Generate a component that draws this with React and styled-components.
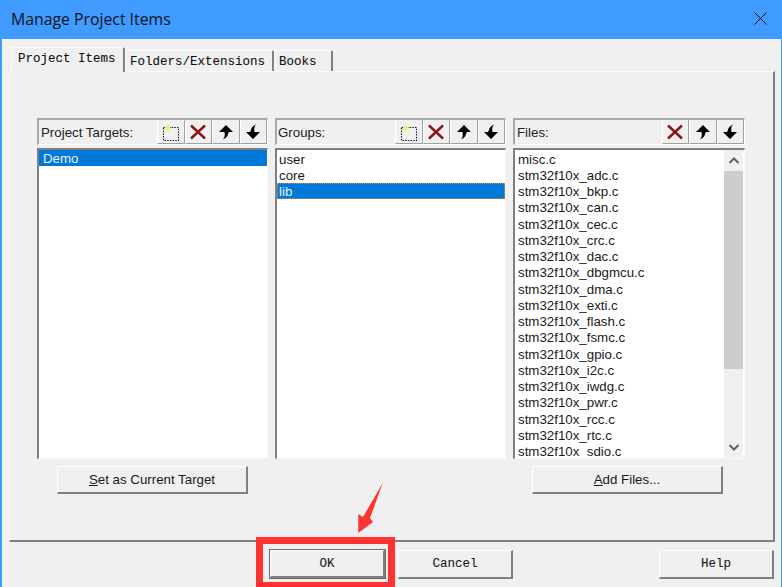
import styled, { createGlobalStyle } from "styled-components";

const files = [
  "misc.c", "stm32f10x_adc.c", "stm32f10x_bkp.c", "stm32f10x_can.c", "stm32f10x_cec.c",
  "stm32f10x_crc.c", "stm32f10x_dac.c", "stm32f10x_dbgmcu.c", "stm32f10x_dma.c", "stm32f10x_exti.c",
  "stm32f10x_flash.c", "stm32f10x_fsmc.c", "stm32f10x_gpio.c", "stm32f10x_i2c.c", "stm32f10x_iwdg.c",
  "stm32f10x_pwr.c", "stm32f10x_rcc.c", "stm32f10x_rtc.c", "stm32f10x_sdio.c",
];

const Global = createGlobalStyle`
  html, body { margin: 0; padding: 0; background: #f0f0f0; }
`;

const Win = styled.div`
  position: relative;
  width: 782px;
  height: 587px;
  overflow: hidden;
  box-sizing: border-box;
  display: flex;
  flex-direction: column;
  background: #f0f0f0;
  border-left: 2px solid #3f9bff;
  border-right: 1px solid #3f9bff;
  font-family: "Liberation Sans", Arial, sans-serif;
`;

const TitleBar = styled.div`
  height: 39px;
  flex: none;
  margin: 0 -1px 0 -2px;
  padding: 0 15px 2px 11px;
  box-sizing: border-box;
  display: flex;
  align-items: center;
  justify-content: space-between;
  background: #3f9bff;
  color: #0c1420;
  font-family: "Open Sans", sans-serif;
  font-size: 15.8px;
`;

const Body = styled.div`
  flex: 1;
  padding: 8px 7px 0 7px;
  display: flex;
  flex-direction: column;
`;

const TabStrip = styled.div`
  display: flex;
  align-items: flex-end;
  height: 24px;
  padding-left: 2px;
`;

const Tab = styled.div`
  box-sizing: border-box;
  width: ${(p) => p.$w}px;
  height: ${(p) => (p.$active ? 25 : 21)}px;
  margin-bottom: ${(p) => (p.$active ? -1 : 0)}px;
  padding-left: ${(p) => (p.$active ? 6 : 4)}px;
  padding-top: 3px;
  position: relative;
  z-index: ${(p) => (p.$active ? 1 : 0)};
  background: #f0f0f0;
  border-top: 1px solid #fbfbfb;
  border-left: 1px solid #fbfbfb;
  border-right: 2px solid #808080;
  border-radius: 2px 2px 0 0;
  font-family: "Liberation Mono", "DejaVu Sans Mono", monospace;
  font-size: 12.5px;
  line-height: 16px;
  color: #111;
  -webkit-text-stroke: 0.1px #111;
  white-space: pre;
`;

const TabPanel = styled.div`
  box-sizing: border-box;
  width: 766px;
  height: 471px;
  padding: 46px 0 0 27px;
  border-top: 1px solid #fbfbfb;
  border-left: 1px solid #fbfbfb;
  border-right: 2px solid #808080;
  border-bottom: 2px solid #808080;
`;

const Columns = styled.div`
  display: flex;
  gap: 7px;
`;

const Column = styled.div`
  width: ${(p) => p.$w}px;
  display: flex;
  flex-direction: column;
`;

const Header = styled.div`
  box-sizing: border-box;
  height: 27px;
  display: flex;
  align-items: center;
  justify-content: space-between;
  border-top: 2px solid #a8a8a8;
  border-left: 2px solid #a8a8a8;
  border-bottom: 1px solid #fff;
  border-right: 1px solid #fff;
  font-size: 13.3px;
  color: #222;
`;

const HeaderLabel = styled.span`
  padding-left: ${(p) => p.$pad ?? 2}px;
  padding-top: 1px;
`;

const Tools = styled.div`
  display: flex;
  align-self: stretch;
`;

const ToolButton = styled.div`
  box-sizing: border-box;
  width: 27.5px;
  display: flex;
  align-items: center;
  justify-content: center;
  border-left: 1px solid #fff;
  border-right: 1px solid #a0a0a0;
  border-bottom: 1px solid #a0a0a0;
`;

const ListBox = styled.div`
  box-sizing: border-box;
  height: 311px;
  margin-top: 3px;
  display: flex;
  overflow: hidden;
  background: #fff;
  border-top: 2px solid #7f7f7f;
  border-left: 2px solid #7f7f7f;
  border-right: 1px solid #f8f8f8;
  border-bottom: 1px solid #f8f8f8;
`;

const Items = styled.div`
  flex: 1;
  min-width: 0;
  padding-top: ${(p) => (p.$dense ? 0.5 : 0)}px;
  overflow: hidden;
`;

const Item = styled.div`
  box-sizing: border-box;
  height: 16.28px;
  line-height: 18px;
  padding-left: ${(p) => p.$pad}px;
  font-size: 13.3px;
  white-space: nowrap;
  color: ${(p) => (p.$selected ? "#e8f2fb" : "#1a1a1a")};
  background: ${(p) => (p.$selected ? "#0078d7" : "transparent")};
  outline: ${(p) => (p.$focus ? "1px dotted #e08a30" : "none")};
  outline-offset: -1px;
`;

const ScrollBar = styled.div`
  width: 19px;
  flex: none;
  display: flex;
  flex-direction: column;
  background: #f0f0f0;
  margin-right: 1px;
`;

const ScrollArrow = styled.div`
  height: 21px;
  flex: none;
  display: flex;
  align-items: center;
  justify-content: center;
`;

const ScrollTrack = styled.div`
  flex: 1;
`;

const ScrollThumb = styled.div`
  height: 198px;
  background: #cdcdcd;
`;

const ButtonRow = styled.div`
  display: flex;
  justify-content: center;
  margin-top: 7px;
  padding-right: ${(p) => p.$shift || 0}px;
`;

const PushButton = styled.div`
  box-sizing: border-box;
  width: ${(p) => p.$w}px;
  height: ${(p) => p.$h || 28}px;
  display: flex;
  align-items: center;
  justify-content: center;
  background: #f0f0f0;
  color: #1a1a1a;
  border-top: 1px solid #fff;
  border-left: 1px solid #fff;
  border-right: 2px solid #808080;
  border-bottom: 2px solid #808080;
  box-shadow: 0 0 0 ${(p) => (p.$default ? 1 : 0)}px #6a6a6a;
  font-family: ${(p) => (p.$mono ? '"Liberation Mono", monospace' : "inherit")};
  font-size: ${(p) => (p.$mono ? "12.5px" : "13.3px")};
  -webkit-text-stroke: ${(p) => (p.$mono ? "0.1px #111" : "0")};
`;

const Footer = styled.div`
  display: flex;
  padding: 8px 0 0 261px;
`;

const FooterGap = styled.div`
  width: ${(p) => p.$w}px;
`;

const Mark = styled.div`
  position: absolute;
  left: 254px;
  top: 537px;
  width: 139px;
  height: 50px;
  box-sizing: border-box;
  border: 7px solid #ff3333;
  border-bottom-width: 5px;
`;

const Arrow = styled.svg`
  position: absolute;
  left: 352px;
  top: 481px;
`;

const NewIcon = () => (
  <svg width="20" height="20" viewBox="0 0 20 20">
    <rect x="2.5" y="5.5" width="15" height="13" fill="none" stroke="#1c1c1c" strokeWidth="1.1" strokeDasharray="1.5 1.2" />
    <path d="M6.5 2 L7.4 5 L10.5 3.5 L8.6 6 L11 7.5 L8 7.5 L7 10.5 L5.8 8 L2.5 8 L5 6 Z" fill="#f7f06a" />
  </svg>
);

const DeleteIcon = () => (
  <svg width="18" height="18" viewBox="0 0 18 18">
    <path d="M2 2.5 L16 15.5 M16 2.5 L2 15.5" stroke="#8e1414" strokeWidth="2.4" fill="none" />
  </svg>
);

const UpIcon = () => (
  <svg width="16" height="18" viewBox="0 0 16 18">
    <path d="M8 2 L15 9 L11 9 L10 11 C10 13 8 15 5 16.5 C7 14 7 12 6.5 9 L1 9 Z" fill="#000" />
  </svg>
);

const DownIcon = () => (
  <svg width="16" height="18" viewBox="0 0 16 18">
    <path d="M11 1.5 C9 4 9 6 9.5 9 L15 9 L8 16 L1 9 L5 9 L6 7 C6 5 8 3 11 1.5 Z" fill="#000" />
  </svg>
);

const Chevron = ({ up }) => (
  <svg width="12" height="9" viewBox="0 0 12 9">
    <path d={up ? "M1.5 7 L6 2.5 L10.5 7" : "M1.5 2 L6 6.5 L10.5 2"} fill="none" stroke="#606060" strokeWidth="2" />
  </svg>
);

const CloseIcon = () => (
  <svg width="13" height="13" viewBox="0 0 13 13">
    <path d="M0.5 0.5 L12.5 12.5 M12.5 0.5 L0.5 12.5" stroke="#111" strokeWidth="1" fill="none" />
  </svg>
);

const Toolbar = ({ hideNew }) => (
  <Tools>
    {!hideNew && <ToolButton><NewIcon /></ToolButton>}
    <ToolButton><DeleteIcon /></ToolButton>
    <ToolButton><UpIcon /></ToolButton>
    <ToolButton><DownIcon /></ToolButton>
  </Tools>
);

export default function App() {
  return (
    <Win>
      <Global />
      <TitleBar>
        <span>Manage Project Items</span>
        <CloseIcon />
      </TitleBar>
      <Body>
        <TabStrip>
          <Tab $active $w={114}>Project Items</Tab>
          <Tab $w={149}>Folders/Extensions</Tab>
          <Tab $w={59}>Books</Tab>
        </TabStrip>
        <TabPanel>
          <Columns>
            <Column $w={231}>
              <Header>
                <HeaderLabel>Project Targets:</HeaderLabel>
                <Toolbar />
              </Header>
              <ListBox>
                <Items>
                  <Item $selected $pad={4}>Demo</Item>
                </Items>
              </ListBox>
              <ButtonRow>
                <PushButton $w={191}><span><u>S</u>et as Current Target</span></PushButton>
              </ButtonRow>
            </Column>
            <Column $w={231}>
              <Header>
                <HeaderLabel $pad={1}>Groups:</HeaderLabel>
                <Toolbar />
              </Header>
              <ListBox>
                <Items $dense>
                  <Item $pad={2}>user</Item>
                  <Item $pad={2}>core</Item>
                  <Item $selected $focus $pad={2}>lib</Item>
                </Items>
              </ListBox>
            </Column>
            <Column $w={232}>
              <Header>
                <HeaderLabel>Files:</HeaderLabel>
                <Toolbar hideNew />
              </Header>
              <ListBox>
                <Items $dense>
                  {files.map((f) => (
                    <Item key={f} $pad={3}>{f}</Item>
                  ))}
                </Items>
                <ScrollBar>
                  <ScrollArrow><Chevron up /></ScrollArrow>
                  <ScrollThumb />
                  <ScrollTrack />
                  <ScrollArrow><Chevron /></ScrollArrow>
                </ScrollBar>
              </ListBox>
              <ButtonRow $shift={3}>
                <PushButton $w={191}><span><u>A</u>dd Files...</span></PushButton>
              </ButtonRow>
            </Column>
          </Columns>
        </TabPanel>
        <Footer>
          <PushButton $default $mono $w={115} $h={28}>OK</PushButton>
          <FooterGap $w={13} />
          <PushButton $mono $w={115} $h={29}>Cancel</PushButton>
          <FooterGap $w={146} />
          <PushButton $mono $w={115} $h={29}>Help</PushButton>
        </Footer>
      </Body>
      <Arrow width="32" height="56" viewBox="354 481 32 56">
        <path d="M382.7 483 L370 518 L373 522 L358.3 533 L358.3 514 L363 517 Z" fill="#ff3333" />
      </Arrow>
      <Mark />
    </Win>
  );
}
